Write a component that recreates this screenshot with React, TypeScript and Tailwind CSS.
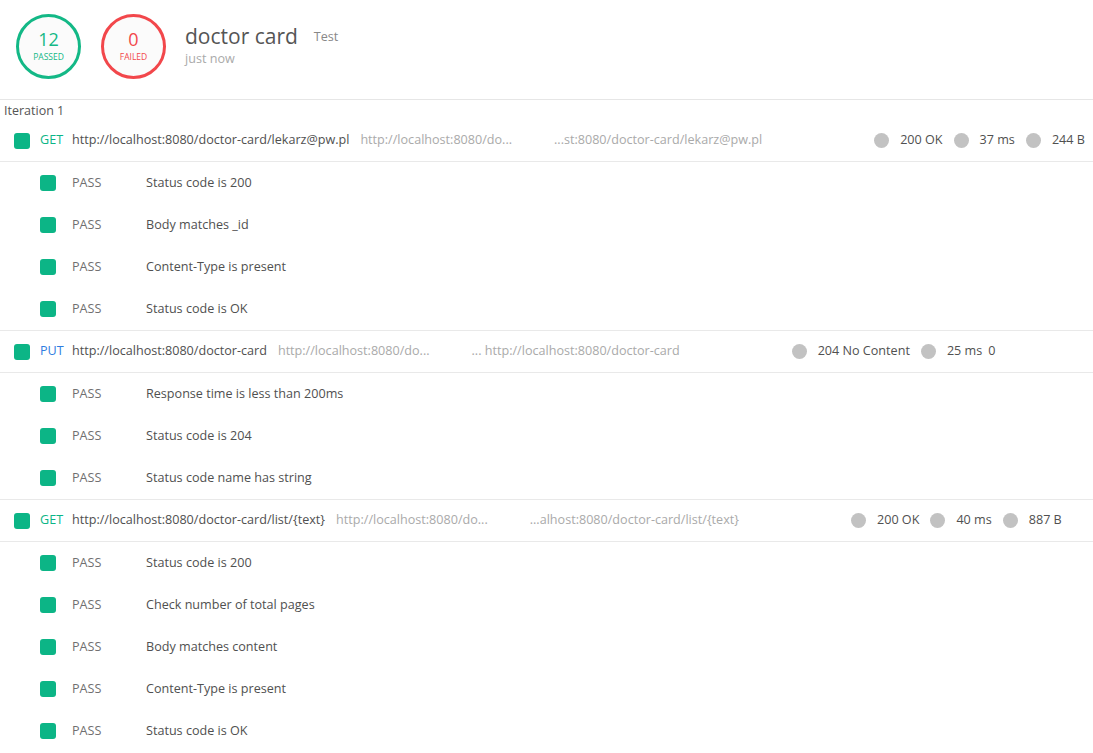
import React from "react";

type Req = {
  method: string;
  methodColor: string;
  url: string;
  url2: string;
  url3: string;
  stats: string[];
  noLastDot?: boolean;
  tests: string[];
};

const reqs: Req[] = [
  {
    method: "GET",
    methodColor: "text-[#0cb586]",
    url: "http://localhost:8080/doctor-card/lekarz@pw.pl",
    url2: "http://localhost:8080/do...",
    url3: "...st:8080/doctor-card/lekarz@pw.pl",
    stats: ["200 OK", "37 ms", "244 B"],
    tests: ["Status code is 200", "Body matches _id", "Content-Type is present", "Status code is OK"],
  },
  {
    method: "PUT",
    methodColor: "text-[#2f7de0]",
    url: "http://localhost:8080/doctor-card",
    url2: "http://localhost:8080/do...",
    url3: "... http://localhost:8080/doctor-card",
    stats: ["204 No Content", "25 ms", "0"],
    noLastDot: true,
    tests: ["Response time is less than 200ms", "Status code is 204", "Status code name has string"],
  },
  {
    method: "GET",
    methodColor: "text-[#0cb586]",
    url: "http://localhost:8080/doctor-card/list/{text}",
    url2: "http://localhost:8080/do...",
    url3: "...alhost:8080/doctor-card/list/{text}",
    stats: ["200 OK", "40 ms", "887 B"],
    tests: [
      "Status code is 200",
      "Check number of total pages",
      "Body matches content",
      "Content-Type is present",
      "Status code is OK",
    ],
  },
];

function Dot() {
  return <span className="inline-block w-[15px] h-[15px] rounded-full bg-[#c2c2c2] shrink-0" />;
}

function Square() {
  return <span className="inline-block w-[16px] h-[16px] rounded-[3px] bg-[#0cb586] shrink-0" />;
}

export default function App() {
  return (
    <div
      className="w-[1093px] h-[753px] overflow-hidden bg-white text-[12.6px] text-[#505050]"
      style={{ fontFamily: '"Open Sans", "Noto Sans", sans-serif' }}
    >
      <div className="h-[100px] flex items-start pl-[16px] pt-[14px] border-b border-[#e6e6e6]">
        <div className="w-[65px] h-[65px] rounded-full border-[3px] border-[#13b886] bg-[#fbfbfb] flex flex-col items-center justify-center">
          <div className="text-[18px] leading-[20px] text-[#13b886] -mt-[3px]">12</div>
          <div className="text-[8.5px] leading-[10px] text-[#13b886] mt-[3px] uppercase">Passed</div>
        </div>
        <div className="ml-[20px] w-[65px] h-[65px] rounded-full border-[3px] border-[#f2474b] bg-[#fbfbfb] flex flex-col items-center justify-center">
          <div className="text-[18px] leading-[20px] text-[#f2474b] -mt-[3px]">0</div>
          <div className="text-[8.5px] leading-[10px] text-[#f2474b] mt-[3px] uppercase">Failed</div>
        </div>
        <div className="ml-[19px] flex flex-col mt-[9px]">
          <div className="flex items-center h-[26px]">
            <span className="text-[21px] leading-[26px] text-[#555]">doctor card</span>
            <span className="ml-[16px] mt-[2px] text-[12.6px] leading-[16px] text-[#888]">Test</span>
          </div>
          <div className="text-[12.6px] leading-[16px] text-[#aaa] mt-[2px]">just now</div>
        </div>
      </div>
      <div className="pl-[4px] pt-[2px] h-[20px] text-[12.5px] leading-[18px] text-[#555]">Iteration 1</div>
      {reqs.map((r, i) => (
        <div key={i}>
          <div
            className={`flex items-center pl-[14px] pr-[8px] border-b border-[#e9e9e9] ${
              i > 0 ? "border-t h-[43px]" : "h-[42px]"
            }`}
          >
            <Square />
            <span className={`ml-[10px] w-[32px] ${r.methodColor}`}>{r.method}</span>
            <span>{r.url}</span>
            <span className="ml-[11px] text-[#aaa]">{r.url2}</span>
            <span className="ml-[42px] text-[#aaa]">{r.url3}</span>
            <div className="ml-[112px] flex items-center">
              {r.stats.map((s, j) => {
                const dot = !(r.noLastDot && j === r.stats.length - 1);
                return (
                  <div key={j} className={`flex items-center ${j > 0 ? (dot ? "ml-[11px]" : "ml-[6px]") : ""}`}>
                    {dot && <Dot />}
                    <span className={dot ? "ml-[11px]" : ""}>{s}</span>
                  </div>
                );
              })}
            </div>
          </div>
          {r.tests.map((t, j) => (
            <div key={j} className="h-[42px] flex items-center pl-[40px]">
              <Square />
              <span className="ml-[16px] w-[74px] text-[#707070]">PASS</span>
              <span>{t}</span>
            </div>
          ))}
        </div>
      ))}
    </div>
  );
}
